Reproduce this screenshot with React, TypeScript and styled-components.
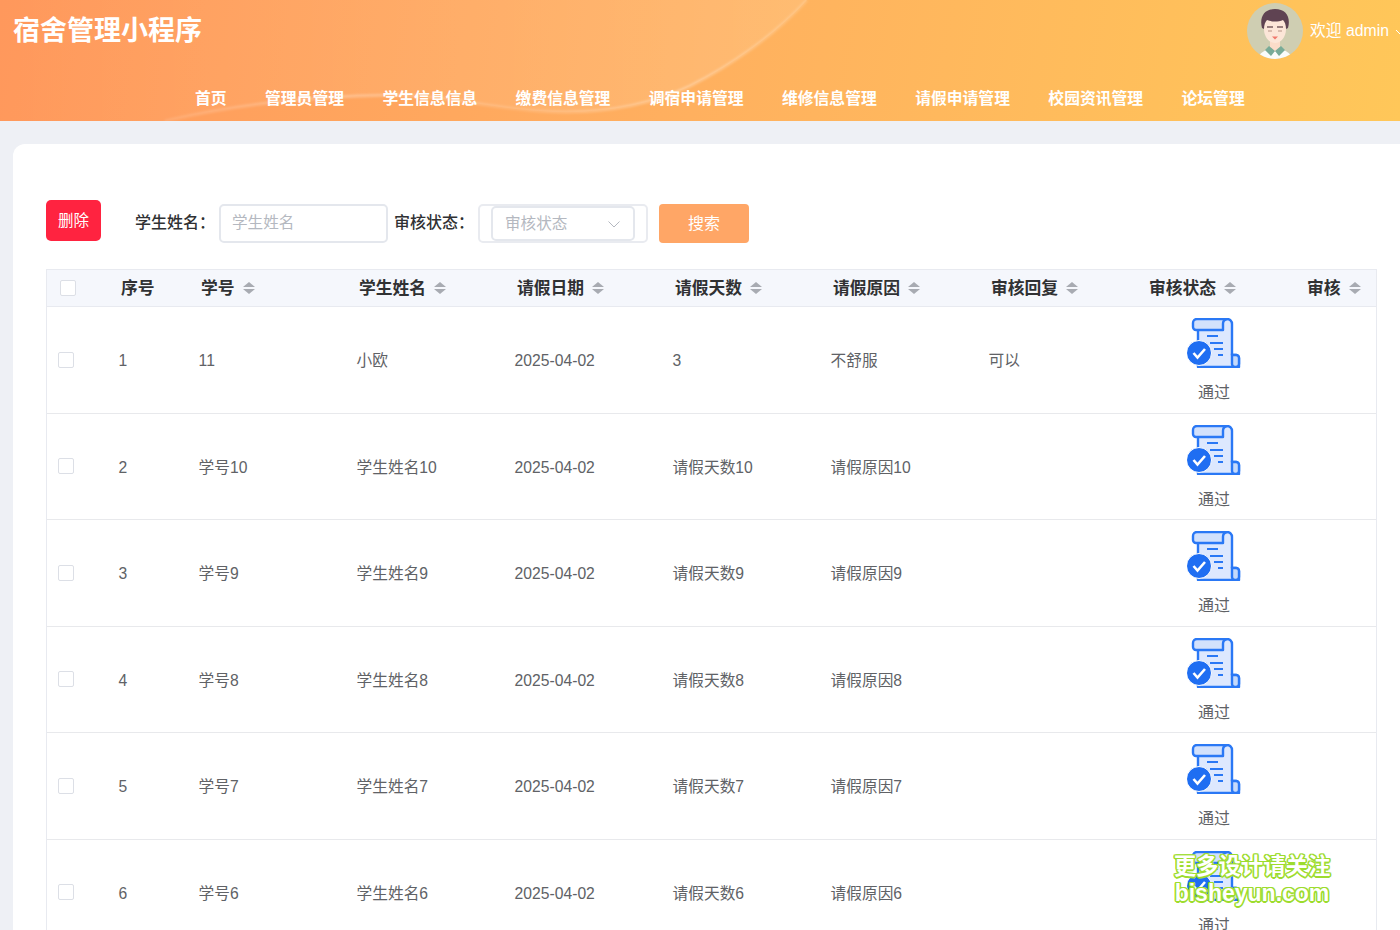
import React from 'react';
import styled, { createGlobalStyle } from 'styled-components';

const GlobalStyle = createGlobalStyle`
  html, body {
    margin: 0;
    padding: 0;
    height: 930px;
    overflow: hidden;
    background: #eef0f5;
    font-family: "Liberation Sans", "Noto Sans CJK SC", sans-serif;
  }
  * { box-sizing: border-box; }
`;

const Header = styled.header`
  position: relative;
  height: 121px;
  overflow: hidden;
  color: #fff;
  background: linear-gradient(100deg, #ff985c 0%, #ffb05f 50%, #ffc759 100%);
`;

const HeaderWave = styled.svg`
  position: absolute;
  inset: 0;
  width: 1400px;
  height: 121px;
`;

const TopBar = styled.div`
  position: relative;
  display: flex;
  justify-content: space-between;
  height: 77px;
  padding: 3px 0 0 13px;
`;

const Title = styled.h1`
  margin: 9px 0 0;
  font-size: 27px;
  line-height: 38px;
  font-weight: 700;
`;

const UserBox = styled.div`
  display: flex;
  align-items: flex-start;
  width: 153px;
  flex: none;
  white-space: nowrap;
`;

const Avatar = styled.svg`
  width: 56px;
  height: 56px;
  flex: none;
`;

const Welcome = styled.span`
  margin: 17px 0 0 7px;
  font-size: 15.8px;
  line-height: 22px;
`;

const Caret = styled.svg`
  width: 10px;
  height: 10px;
  margin: 24px 0 0 6px;
  flex: none;
`;

const Nav = styled.nav`
  position: relative;
  display: flex;
  gap: 38.4px;
  padding-left: 195px;
`;

const NavItem = styled.a`
  font-size: 15.8px;
  line-height: 44px;
  font-weight: 700;
  white-space: nowrap;
`;

const Card = styled.main`
  width: 1400px;
  height: 800px;
  margin: 23px 0 0 13px;
  padding: 56px 0 0 33px;
  background: #fff;
  border-radius: 12px 12px 0 0;
`;

const Toolbar = styled.div`
  display: flex;
  align-items: flex-start;
  height: 69px;
  color: #303133;
`;

const DeleteButton = styled.button`
  width: 55px;
  height: 41px;
  padding: 0 0 4px;
  border: 0;
  border-radius: 5px;
  background: #ff2340;
  color: #fff;
  font: inherit;
  font-size: 15.5px;
`;

const Label = styled.label<{ $left: number }>`
  width: 84px;
  margin: 4px 0 0 ${p => p.$left}px;
  font-size: 16px;
  font-weight: 500;
  line-height: 38px;
  white-space: nowrap;
`;

const TextBox = styled.div`
  width: 169px;
  height: 39px;
  margin-top: 4px;
  padding-left: 11px;
  border: 2px solid #e4e7ed;
  border-radius: 5px;
  color: #b4b8c0;
  font-size: 15.6px;
  line-height: 33px;
`;

const SelectOuter = styled.div`
  width: 170px;
  height: 39px;
  margin-top: 4px;
  padding: 0 11px;
  border: 2px solid #e9ebf0;
  border-radius: 5px;
`;

const SelectInner = styled.div`
  display: flex;
  align-items: center;
  justify-content: space-between;
  height: 35px;
  padding: 0 12px;
  border: 2px solid #e4e7ed;
  border-radius: 5px;
  color: #b4b8c0;
  font-size: 15.6px;
  line-height: 27px;
`;

const Chevron = styled.svg`
  width: 14px;
  height: 14px;
  flex: none;
`;

const SearchButton = styled.button`
  width: 90px;
  height: 39px;
  margin: 4px 0 0 11px;
  padding: 0 0 3px;
  border: 0;
  border-radius: 4px;
  background: #ffa666;
  color: #fff;
  font: inherit;
  font-size: 16px;
`;

const Table = styled.div`
  width: 1331px;
  border: 1px solid #e8eaf0;
  border-bottom: 0;
`;

const gridColumns = '60px 80px repeat(7, 158px) 1fr';

const HeadRow = styled.div`
  display: grid;
  grid-template-columns: ${gridColumns};
  align-items: center;
  height: 37px;
  background: #f5f7fc;
  border-bottom: 1px solid #e8eaf0;
`;

const HeadCell = styled.div`
  display: flex;
  align-items: center;
  gap: 8px;
  padding: 0 0 2px 14px;
  color: #303133;
  font-size: 16.8px;
  font-weight: 700;
  white-space: nowrap;
`;

const SortIcon = styled.span`
  display: inline-flex;
  flex-direction: column;
  gap: 1.5px;
  margin-top: 2px;
  &::before, &::after {
    content: '';
    width: 0;
    height: 0;
    border-left: 6px solid transparent;
    border-right: 6px solid transparent;
  }
  &::before { border-bottom: 5.5px solid #a8abb2; }
  &::after { border-top: 5.5px solid #a8abb2; }
`;

const Row = styled.div`
  display: grid;
  grid-template-columns: ${gridColumns};
  align-items: center;
  height: 106.5px;
  border-bottom: 1px solid #e8e9ec;
`;

const Cell = styled.div`
  padding: 3px 0 0 11.6px;
  color: #606266;
  font-size: 15.7px;
  line-height: 22px;
  white-space: nowrap;
`;

const CheckCell = styled.div<{ $left: number }>`
  padding-left: ${p => p.$left}px;
`;

const CheckBox = styled.span`
  display: block;
  width: 16px;
  height: 16px;
  border: 1px solid #dcdfe6;
  border-radius: 2px;
  background: #fff;
`;

const StatusCell = styled.div`
  display: flex;
  flex-direction: column;
  align-items: center;
  width: 54px;
  margin: 0 0 0 52px;
  padding-top: 2px;
  color: #606266;
  font-size: 16px;
  white-space: nowrap;
`;

const DocIcon = styled.svg`
  width: 54px;
  height: 50px;
  margin-bottom: 15px;
`;

const StatusText = styled.span`
  line-height: 20px;
`;

const Watermark = styled.div`
  position: absolute;
  left: 1172px;
  top: 853px;
  width: 160px;
  color: #fff;
  font-weight: 700;
  text-align: center;
  text-shadow: 1.5px 0 #9ddc2e, -1.5px 0 #9ddc2e, 0 1.5px #9ddc2e, 0 -1.5px #9ddc2e,
    1.2px 1.2px #9ddc2e, -1.2px 1.2px #9ddc2e, 1.2px -1.2px #9ddc2e, -1.2px -1.2px #9ddc2e;
`;

const WatermarkLine = styled.div<{ $size: number }>`
  font-size: ${p => p.$size}px;
  line-height: 27px;
  white-space: nowrap;
`;

const navItems = ['首页', '管理员管理', '学生信息信息', '缴费信息管理', '调宿申请管理', '维修信息管理', '请假申请管理', '校园资讯管理', '论坛管理'];
const columns = ['学号', '学生姓名', '请假日期', '请假天数', '请假原因', '审核回复', '审核状态', '审核'];

const rows = [
  { id: 1, no: '11', name: '小欧', days: '3', reason: '不舒服', reply: '可以' },
  ...[10, 9, 8, 7, 6].map((n, i) => ({
    id: i + 2,
    no: `学号${n}`,
    name: `学生姓名${n}`,
    days: `请假天数${n}`,
    reason: `请假原因${n}`,
    reply: '',
  })),
];

const AvatarImage = () => (
  <Avatar viewBox="0 0 56 56">
    <defs>
      <clipPath id="avatar-clip">
        <circle cx="28" cy="28" r="28" />
      </clipPath>
    </defs>
    <g clipPath="url(#avatar-clip)">
      <rect width="56" height="56" fill="#cfceb2" />
      <path d="M11 56c1-7 9-10 17-11 8 1 16 4 17 11z" fill="#fbfcfa" />
      <path d="M23 36h10v9l-5 4-5-4z" fill="#fbdcc9" />
      <path d="M22 43l6 5-4 5-6-6zM34 43l-6 5 4 5 6-6z" fill="#79ab97" />
      <ellipse cx="28" cy="26" rx="11" ry="14" fill="#fce6d8" />
      <path d="M15 25c-3-12 3-19 13-19 11 0 16 8 13 19l-2 1c0-4-1-7-3-9-5 2-11 2-16 0-2 2-3 5-3 9z" fill="#5f4352" />
      <path d="M20 24h6M30 24h6" stroke="#7a5f60" strokeWidth="1.3" fill="none" />
      <path d="M21 28h4M31 28h4" stroke="#b89486" strokeWidth="1.1" fill="none" />
      <path d="M25 33.5h6l-3 3z" fill="#f0786c" />
    </g>
  </Avatar>
);

const ApprovedIcon = () => (
  <DocIcon viewBox="0 0 54 50">
    <path d="M11 10V49H52V40a3 3 0 0 0-3-3H45V6a5 5 0 0 0-5-5H11z" fill="#dde8fe" stroke="#2a78f5" strokeWidth="2.4" strokeLinejoin="round" />
    <path d="M45 37v9a3 3 0 0 0 3 3h1a3 3 0 0 0 3-3v-6a3 3 0 0 0-3-3z" fill="#c6dafb" stroke="#2a78f5" strokeWidth="2.4" />
    <path d="M10 1h30a5 5 0 0 0-4 5v6H9a3 3 0 0 1-3-3V5a4 4 0 0 1 4-4z" fill="#d2e1fc" stroke="#2a78f5" strokeWidth="2.4" strokeLinejoin="round" />
    <path d="M20 18h11M23 25h13M27 31h9M31 37h5" stroke="#2a78f5" strokeWidth="2.2" fill="none" />
    <circle cx="12" cy="35" r="12.5" fill="#1f6ef2" stroke="#fff" strokeWidth="1" />
    <path d="M6.5 35l4 4.5 7.5-8.5" stroke="#fff" strokeWidth="2.6" fill="none" />
  </DocIcon>
);

export default function App() {
  return (
    <>
      <GlobalStyle />
      <Header>
        <HeaderWave viewBox="0 0 1400 121">
          <defs>
            <linearGradient id="wave-fill" x1="0" x2="1" y1="0" y2="0">
              <stop offset="0" stopColor="#fff" stopOpacity="0" />
              <stop offset="0.25" stopColor="#fff" stopOpacity="0.03" />
              <stop offset="1" stopColor="#fff" stopOpacity="0.12" />
            </linearGradient>
            <linearGradient id="wave-line" x1="0" x2="1" y1="0" y2="0">
              <stop offset="0" stopColor="#fff" stopOpacity="0.12" />
              <stop offset="0.3" stopColor="#fff" stopOpacity="0.28" />
              <stop offset="0.55" stopColor="#fff" stopOpacity="0.14" />
              <stop offset="0.8" stopColor="#fff" stopOpacity="0.3" />
              <stop offset="1" stopColor="#fff" stopOpacity="0.16" />
            </linearGradient>
            <filter id="wave-blur">
              <feGaussianBlur stdDeviation="1.2" />
            </filter>
          </defs>
          <path d="M165 121C220 108 300 96 395 95C450 96 490 108 540 111C600 115 650 105 690 86C730 66 775 35 807 0H0V121Z" fill="url(#wave-fill)" />
          <path d="M165 121C220 108 300 96 395 95C450 96 490 108 540 111C600 115 650 105 690 86C730 66 775 35 807 0" stroke="url(#wave-line)" strokeWidth="3" fill="none" filter="url(#wave-blur)" />
        </HeaderWave>
        <TopBar>
          <Title>宿舍管理小程序</Title>
          <UserBox>
            <AvatarImage />
            <Welcome>欢迎 admin</Welcome>
            <Caret viewBox="0 0 10 10">
              <path d="M1 3l4 4 4-4" stroke="#fff" strokeWidth="1" fill="none" />
            </Caret>
          </UserBox>
        </TopBar>
        <Nav>
          {navItems.map(item => (
            <NavItem key={item}>{item}</NavItem>
          ))}
        </Nav>
      </Header>
      <Card>
        <Toolbar>
          <DeleteButton>删除</DeleteButton>
          <Label $left={34}>学生姓名：</Label>
          <TextBox>学生姓名</TextBox>
          <Label $left={6}>审核状态：</Label>
          <SelectOuter>
            <SelectInner>
              审核状态
              <Chevron viewBox="0 0 14 14">
                <path d="M1.5 4.5L7 10l5.5-5.5" stroke="#b4b8c0" strokeWidth="1" fill="none" />
              </Chevron>
            </SelectInner>
          </SelectOuter>
          <SearchButton>搜索</SearchButton>
        </Toolbar>
        <Table>
          <HeadRow>
            <CheckCell $left={13}>
              <CheckBox />
            </CheckCell>
            <HeadCell>序号</HeadCell>
            {columns.map(col => (
              <HeadCell key={col}>
                {col}
                <SortIcon />
              </HeadCell>
            ))}
          </HeadRow>
          {rows.map(row => (
            <Row key={row.id}>
              <CheckCell $left={11}>
                <CheckBox />
              </CheckCell>
              <Cell>{row.id}</Cell>
              <Cell>{row.no}</Cell>
              <Cell>{row.name}</Cell>
              <Cell>2025-04-02</Cell>
              <Cell>{row.days}</Cell>
              <Cell>{row.reason}</Cell>
              <Cell>{row.reply}</Cell>
              <StatusCell>
                <ApprovedIcon />
                <StatusText>通过</StatusText>
              </StatusCell>
              <Cell />
            </Row>
          ))}
        </Table>
      </Card>
      <Watermark>
        <WatermarkLine $size={22.4}>更多设计请关注</WatermarkLine>
        <WatermarkLine $size={23}>bisheyun.com</WatermarkLine>
      </Watermark>
    </>
  );
}
